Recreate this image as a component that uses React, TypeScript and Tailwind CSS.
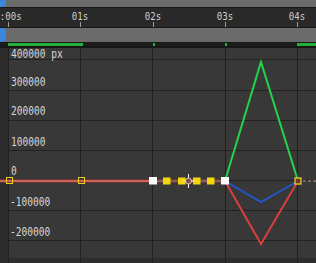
const ticks = [
  { label: "0:00s", x: "left-[8px]" },
  { label: "01s", x: "left-[80px]" },
  { label: "02s", x: "left-[153px]" },
  { label: "03s", x: "left-[225px]" },
  { label: "04s", x: "left-[297px]" },
]

const gridX = [8.5, 80.5, 152.5, 225.5, 297.5]
const gridY = [59.5, 90.5, 120.5, 150.5, 180.5, 210.5, 240.5]

const valueLabels = [
  { text: "400000 px", x: 11, y: 58 },
  { text: "300000", x: 11, y: 86 },
  { text: "200000", x: 11, y: 115 },
  { text: "100000", x: 11, y: 146 },
  { text: "0", x: 11, y: 175 },
  { text: "-100000", x: 10, y: 206 },
  { text: "-200000", x: 10, y: 236 },
]

function Ruler() {
  return (
    <div className="relative h-[19px] bg-[#292929]">
      {ticks.map((t) => (
        <div key={t.label} className={`absolute top-0 h-full ${t.x}`}>
          <span className="absolute left-0 top-[2px] -translate-x-1/2 scale-x-[0.82] text-[11px] leading-[14px] whitespace-nowrap text-[#cfcfcf]">
            {t.label}
          </span>
          <span className="absolute bottom-0 left-0 h-[5px] w-px bg-[#9a9a9a]" />
        </div>
      ))}
    </div>
  )
}

function Graph() {
  return (
    <svg
      className="absolute inset-0"
      width={316}
      height={215}
      viewBox="0 48 316 215"
      fontFamily="'DejaVu Sans Mono', monospace"
    >
      {gridY.map((y) => (
        <line key={y} x1={9} x2={316} y1={y} y2={y} stroke="#222" strokeWidth={1} />
      ))}
      {gridX.map((x) => (
        <line key={x} x1={x} x2={x} y1={48} y2={263} stroke="#202020" strokeWidth={1} />
      ))}
      {valueLabels.map((l) => (
        <text
          key={l.text}
          x={l.x}
          y={l.y}
          fontSize={11.5}
          fill="#d6d6d6"
          textLength={l.text.length * 5.75}
          lengthAdjust="spacingAndGlyphs"
        >
          {l.text}
        </text>
      ))}

      {/* position curve */}
      <line x1={0} x2={225} y1={181} y2={181} stroke="#7a3834" strokeWidth={3.5} />
      <line x1={0} x2={157} y1={181} y2={181} stroke="#cc625c" strokeWidth={2} />
      <line x1={157} x2={221} y1={181} y2={181} stroke="#84605a" strokeWidth={2} />

      {/* xyz components */}
      <polyline points="225,181 261,62 298,181" fill="none" stroke="#22d44a" strokeWidth={2} />
      <polyline points="225,181 261,202 298,181" fill="none" stroke="#2356c8" strokeWidth={2} />
      <polyline points="225,181 261,244 298,181" fill="none" stroke="#d8403f" strokeWidth={2} />

      {/* dashed selection */}
      {[163, 178, 193, 207].map((x) => (
        <rect key={x} x={x} y={177.5} width={7.5} height={7} fill="#f2d60c" />
      ))}
      <rect x={149} y={177} width={8} height={7.5} fill="#fafafa" />
      <rect x={221} y={177} width={8} height={7.5} fill="#fafafa" />

      {/* trailing dashed */}
      <line x1={303} x2={316} y1={181} y2={181} stroke="#8c7a6c" strokeWidth={1.5} strokeDasharray="3 2" />

      {/* keyframes */}
      <rect x={6.5} y={177.5} width={6} height={6} fill="none" stroke="#e8cf20" strokeWidth={1} />
      <rect x={78.5} y={177.5} width={6} height={6} fill="none" stroke="#e8cf20" strokeWidth={1} />
      <rect x={295} y={178} width={6} height={6} fill="#6e3a2a" stroke="#f0d428" strokeWidth={1.2} />

      {/* playhead marker */}
      <line x1={188.5} x2={188.5} y1={174} y2={188} stroke="#f4f4f4" strokeWidth={1} />
      <line x1={183} x2={194} y1={181} y2={181} stroke="#f4f4f4" strokeWidth={1} />
      <circle cx={188.5} cy={181} r={3} fill="#8c4a44" stroke="#e8e8e8" strokeWidth={0.8} />
    </svg>
  )
}

export default function App() {
  return (
    <div className="flex h-[263px] w-[316px] flex-col overflow-hidden bg-[#171717] font-['DejaVu_Sans_Mono',monospace]">
      <div className="h-[7px] bg-[#6b6b6b]">
        <div className="h-full w-[6px] rounded-br-[3px] bg-[#3a87dc]" />
      </div>
      <div className="h-px" />
      <Ruler />
      <div className="h-px" />
      <div className="h-[14px] bg-[#6b6b6b]">
        <div className="h-full w-[6px] rounded-r-[4px] bg-[#3a87dc]" />
      </div>
      <div className="h-px" />
      <div className="relative h-[3px] bg-[#1d1d1d]">
        <span className="absolute left-[8px] h-full w-[75px] bg-[#25b03d]" />
        <span className="absolute left-[153px] h-full w-[2px] bg-[#25b03d]" />
        <span className="absolute left-[225px] h-full w-[2px] bg-[#25b03d]" />
        <span className="absolute left-[297px] right-0 h-full bg-[#25b03d]" />
      </div>
      <div className="h-[2px]" />
      <div className="relative flex flex-1">
        <div className="w-[8px] bg-[#2c2c2c]" />
        <div className="flex flex-1 flex-col border-l border-[#1e1e1e]">
          <div className="h-[210px] bg-[#383838]" />
          <div className="flex-1 bg-[#2c2c2c]" />
        </div>
        <Graph />
      </div>
    </div>
  )
}
